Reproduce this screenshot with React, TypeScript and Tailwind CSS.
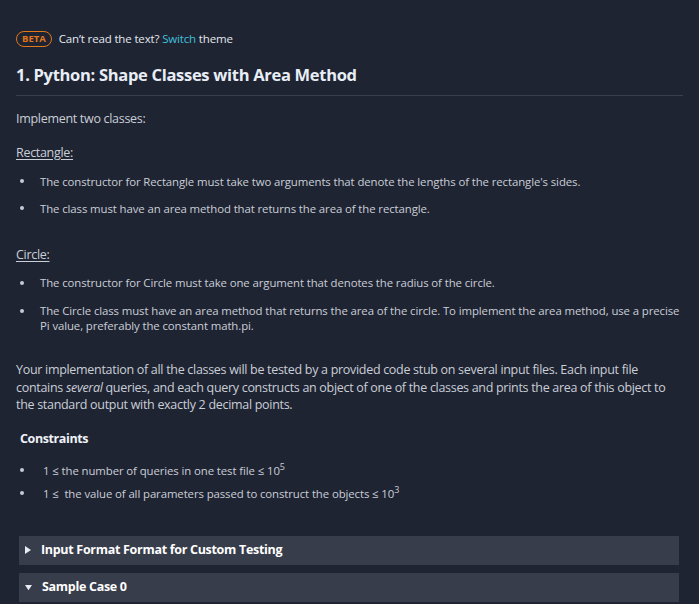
import React from 'react';

const font = { fontFamily: '"Open Sans", "Noto Sans", sans-serif' };

function Dot() {
  return <span className="mt-[6px] h-[4px] w-[4px] shrink-0 rounded-full bg-[#c5cad3]" />;
}

function Bullet({ children }: { children: React.ReactNode }) {
  return (
    <li className="flex gap-[16px]">
      <Dot />
      <span>{children}</span>
    </li>
  );
}

function Section({ title, open }: { title: string; open?: boolean }) {
  return (
    <div className="flex h-[29px] items-center gap-[10px] bg-[#383d4b] px-[6px] text-[12.5px] font-bold tracking-[-0.3px] text-white">
      {open ? (
        <svg width="7" height="7" viewBox="0 0 8 8" className="fill-[#e8ecf2]">
          <path d="M0 1h8L4 7z" />
        </svg>
      ) : (
        <svg width="6" height="8" viewBox="0 0 6 8" className="fill-[#e8ecf2]">
          <path d="M0 0l6 4-6 4z" />
        </svg>
      )}
      <span>{title}</span>
    </div>
  );
}

export default function App() {
  return (
    <div className="min-h-screen bg-[#1f2432] text-[#d3d8e0]" style={font}>
      <div className="px-4 pt-[30px]">
        {/* theme notice */}
        <div className="flex items-center gap-[7px] text-[11.5px] tracking-[-0.15px] text-[#e3e8ef]">
          <span className="rounded-full border border-[#e2761b] px-[5px] text-[9.5px] font-bold leading-[14px] tracking-normal text-[#e2761b]">
            BETA
          </span>
          <span>
            Can’t read the text? <span className="text-[#3fc0dd]">Switch</span> theme
          </span>
        </div>

        <h1 className="mt-[16px] border-b border-[#3a3f4d] pb-[7px] text-[16.5px] font-bold tracking-[-0.3px] text-[#e8eef6]">
          1. Python: Shape Classes with Area Method
        </h1>

        <div className="text-[12.5px] tracking-[-0.3px] text-[#c9ced7]">
          <p className="mt-[14px]">Implement two classes:</p>

          <p className="mt-[15px] underline underline-offset-2">Rectangle:</p>
          <ul className="mt-[10px] space-y-[10px] pl-[4px] text-[11.4px] tracking-[-0.1px]">
            <Bullet>The constructor for Rectangle must take two arguments that denote the lengths of the rectangle's sides.</Bullet>
            <Bullet>The class must have an area method that returns the area of the rectangle.</Bullet>
          </ul>

          <p className="mt-[29px] underline underline-offset-2">Circle:</p>
          <ul className="mt-[11px] space-y-[13px] pl-[4px] text-[11.4px] leading-[15px] tracking-[-0.1px]">
            <Bullet>The constructor for Circle must take one argument that denotes the radius of the circle.</Bullet>
            <Bullet>
              The Circle class must have an area method that returns the area of the circle. To implement the area method,
              use a precise Pi value, preferably the constant math.pi.
            </Bullet>
          </ul>

          <p className="mt-[28px] leading-[17.5px]">
            Your implementation of all the classes will be tested by a provided code stub on several input files. Each input
            file contains <em>several</em> queries, and each query constructs an object of one of the classes and prints the
            area of this object to the standard output with exactly 2 decimal points.
          </p>

          <p className="mt-[16px] pl-[4px] font-bold tracking-[-0.4px] text-[#eef2f7]">Constraints</p>
          <ul className="mt-[13px] space-y-[6px] pl-[4px] text-[11.4px] tracking-[-0.1px]">
            <li className="flex gap-[19px]">
              <Dot />
              <span>
                1 ≤ the number of queries in one test file ≤ 10<sup className="text-[9px]">5</sup>
              </span>
            </li>
            <li className="flex gap-[19px]">
              <Dot />
              <span>
                1 ≤&nbsp; the value of all parameters passed to construct the objects ≤ 10<sup className="text-[9px]">3</sup>
              </span>
            </li>
          </ul>
        </div>

        <div className="mt-[34px] ml-[3px] mr-[4px] space-y-[8px]">
          <Section title="Input Format Format for Custom Testing" />
          <Section title="Sample Case 0" open />
        </div>
      </div>
    </div>
  );
}
